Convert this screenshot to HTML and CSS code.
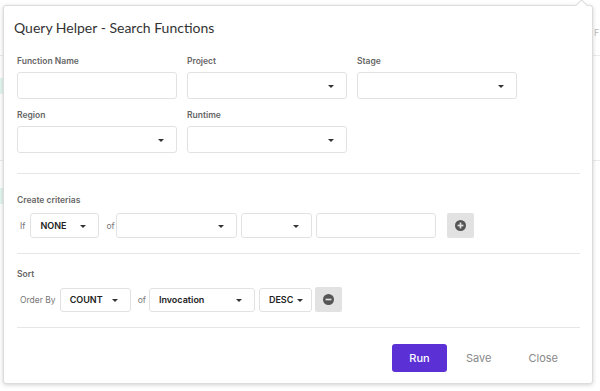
FILE: index.html
```html
<!DOCTYPE html>
<html lang="en">

<head>
    <meta charset="UTF-8">
    <meta name="viewport" content="width=device-width, initial-scale=1.0">
    <title>Query Helper - Search Functions</title>
    <link rel="stylesheet" href="styles.css">
</head>

<body>

    <!-- page behind the popover, only faint bits show -->
    <div class="backdrop">
        <div class="bg-line bg-line-1"></div>
        <div class="bg-line bg-line-2"></div>
        <div class="bg-tag bg-tag-1"></div>
        <div class="bg-tag bg-tag-2"></div>
        <span class="bg-text">F</span>
    </div>

    <div class="popover">
        <span class="caret"></span>
        <h2 class="title">Query Helper - Search Functions</h2>

        <div class="fields">
            <div class="field">
                <label>Function Name</label>
                <div class="input"></div>
            </div>
            <div class="field">
                <label>Project</label>
                <div class="input select"></div>
            </div>
            <div class="field">
                <label>Stage</label>
                <div class="input select"></div>
            </div>
            <div class="field">
                <label>Region</label>
                <div class="input select"></div>
            </div>
            <div class="field">
                <label>Runtime</label>
                <div class="input select"></div>
            </div>
        </div>

        <hr class="divider">

        <div class="section criteria">
            <label>Create criterias</label>
            <div class="row">
                <span class="word">If</span>
                <div class="input select small w-none">NONE</div>
                <span class="word">of</span>
                <div class="input select small w-of"></div>
                <div class="input select small w-op"></div>
                <div class="input small w-val"></div>
                <button class="icon-btn add">
                    <svg width="11" height="11" viewBox="0 0 12 12">
                        <circle cx="6" cy="6" r="6" fill="#555"/>
                        <rect x="2.8" y="5.1" width="6.4" height="1.8" fill="#e2e2e2"/>
                        <rect x="5.1" y="2.8" width="1.8" height="6.4" fill="#e2e2e2"/>
                    </svg>
                </button>
            </div>
        </div>

        <hr class="divider tight">

        <div class="section sort">
            <label>Sort</label>
            <div class="row">
                <span class="word">Order By</span>
                <div class="input select small w-count">COUNT</div>
                <span class="word">of</span>
                <div class="input select small w-inv">Invocation</div>
                <div class="input select small w-desc">DESC</div>
                <button class="icon-btn remove">
                    <svg width="11" height="11" viewBox="0 0 12 12">
                        <circle cx="6" cy="6" r="6" fill="#555"/>
                        <rect x="2.8" y="5.1" width="6.4" height="1.8" fill="#e2e2e2"/>
                    </svg>
                </button>
            </div>
        </div>

        <hr class="divider tight">

        <div class="actions">
            <button class="btn run">Run</button>
            <button class="btn link">Save</button>
            <button class="btn link">Close</button>
        </div>
    </div>

</body>

</html>
```

FILE: styles.css
```css
body {
    margin: 0;
    padding: 0;
    width: 600px;
    height: 391px;
    overflow: hidden;
    background-color: #fff;
    font-family: 'Inter', 'Noto Sans', sans-serif;
    position: relative;
}

.backdrop {
    position: absolute;
    inset: 0;
}

.bg-line {
    position: absolute;
    left: 0;
    width: 600px;
    height: 1px;
    background-color: #ececec;
}

.bg-line-1 {
    top: 55px;
}

.bg-line-2 {
    top: 160px;
}

.bg-tag {
    position: absolute;
    left: 0;
    width: 6px;
    height: 16px;
    background-color: #e3f5ef;
}

.bg-tag-1 {
    top: 78px;
}

.bg-tag-2 {
    top: 188px;
}

.bg-text {
    position: absolute;
    left: 594px;
    top: 27px;
    font-size: 9px;
    color: #bbb;
}

.popover {
    position: absolute;
    left: 3px;
    top: 5px;
    width: 590px;
    height: 379px;
    box-sizing: border-box;
    background-color: #fff;
    border: 1px solid #dcdcdc;
    border-radius: 3px;
    box-shadow: 0 1px 4px rgba(0, 0, 0, 0.18);
    padding: 0 13px 0 13px;
}

.caret {
    position: absolute;
    top: -5px;
    right: 6px;
    width: 8px;
    height: 8px;
    background-color: #fff;
    border-left: 1px solid #dcdcdc;
    border-top: 1px solid #dcdcdc;
    transform: rotate(45deg);
}

.title {
    margin: 12px 0 0 -3px;
    font-family: 'Lato', sans-serif;
    font-size: 14px;
    font-weight: 400;
    color: #333;
    line-height: 20px;
}

label {
    display: block;
    font-size: 8.5px;
    font-weight: 600;
    color: #666;
    line-height: 11px;
}

.fields {
    display: grid;
    grid-template-columns: 160px 160px 160px;
    column-gap: 10px;
    row-gap: 11px;
    margin-top: 18px;
}

.field label {
    margin-bottom: 5px;
}

.input {
    box-sizing: border-box;
    height: 27px;
    border: 1px solid #e2e2e2;
    border-radius: 3px;
    background-color: #fff;
    position: relative;
    font-size: 9px;
    font-weight: 600;
    color: #222;
    display: flex;
    align-items: center;
    padding-left: 9px;
}

.select::after {
    content: "";
    position: absolute;
    right: 12px;
    top: 50%;
    margin-top: -1px;
    border-left: 3px solid transparent;
    border-right: 3px solid transparent;
    border-top: 3px solid #333;
}

.divider {
    border: none;
    border-top: 1px solid #e6e6e6;
    margin: 20px 0 0 0;
    width: 563px;
}

.divider.tight {
    margin-top: 15px;
}

.criteria {
    margin-top: 21px;
}

.criteria label {
    margin-bottom: 7px;
}

.sort {
    margin-top: 15px;
}

.sort label {
    margin-bottom: 7px;
}

.row {
    display: flex;
    align-items: center;
    gap: 4px;
}

.word {
    font-size: 8.5px;
    color: #777;
    padding-left: 3px;
}

.word + .input {
    margin-left: -1px;
}

.word + .w-none {
    margin-left: 1px;
}

.word + .w-of {
    margin-left: -3px;
}

.word + .w-count {
    margin-left: 0;
}

.small {
    height: 25px;
}

.sort .small {
    height: 24px;
}

.w-none {
    width: 69px;
}

.w-of {
    width: 121px;
}

.w-op {
    width: 71px;
}

.w-val {
    width: 120px;
}

.w-count {
    width: 71px;
}

.w-inv {
    width: 106px;
}

.w-desc {
    width: 53px;
}

.w-desc::after {
    right: 8px;
}

.icon-btn {
    width: 27px;
    height: 25px;
    border: none;
    border-radius: 2px;
    background-color: #e2e2e2;
    display: flex;
    align-items: center;
    justify-content: center;
    padding: 0;
}

.add {
    margin-left: 7px;
}

.remove {
    margin-left: -1px;
}

.actions {
    display: flex;
    justify-content: flex-end;
    align-items: center;
    margin-top: 16px;
    padding-right: 21px;
}

.btn {
    font-family: 'Inter', sans-serif;
    font-size: 11px;
    border: none;
    background: none;
    cursor: pointer;
}

.run {
    width: 55px;
    height: 28px;
    border-radius: 3px;
    background-color: #5b31d6;
    color: #fff;
    font-weight: 500;
}

.link {
    color: #888;
    margin-left: 19px;
    padding: 0;
}

.link + .link {
    margin-left: 37px;
}
```
